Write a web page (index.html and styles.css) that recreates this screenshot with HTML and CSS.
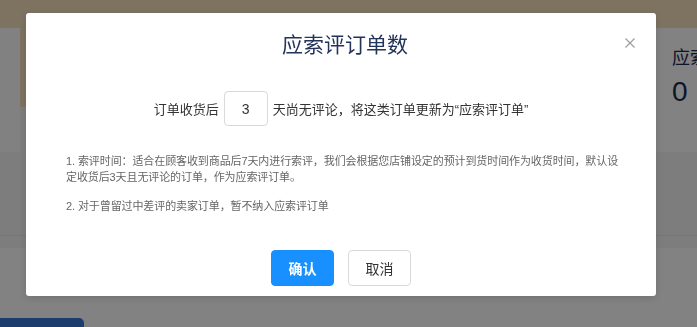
FILE: index.html
```html
<!DOCTYPE html>
<html lang="zh-CN">
<head>
  <meta charset="UTF-8">
  <meta name="viewport" content="width=device-width, initial-scale=1.0">
  <title>应索评订单数</title>
  <link rel="stylesheet" href="styles.css">
</head>
<body>
  <div class="page">
    <!-- Stats row behind the dialog -->
    <div class="stats">
      <div class="stat-card stat-left"></div>
      <div class="stat-card stat-right">
        <div class="stat-label">应索评订单数</div>
        <div class="stat-value">0</div>
      </div>
    </div>

    <div class="toolbar"></div>

    <div class="list">
      <button class="list-btn">批量索评 按钮</button>
    </div>
  </div>

  <div class="mask"></div>

  <!-- Dialog -->
  <div class="modal">
    <span class="modal-close">
      <svg width="10" height="10" viewBox="0 0 10 10"><path d="M0.5 0.5 L9.5 9.5 M9.5 0.5 L0.5 9.5" stroke="#9a9a9a" stroke-width="1.1" fill="none"/></svg>
    </span>
    <h2 class="modal-title">应索评订单数</h2>

    <div class="days-row">
      <span>订单收货后</span>
      <input class="days-input" type="text" value="3">
      <span>天尚无评论，将这类订单更新为“应索评订单”</span>
    </div>

    <div class="notes">
      <p>1. 索评时间：适合在顾客收到商品后7天内进行索评，我们会根据您店铺设定的预计到货时间作为收货时间，默认设定收货后3天且无评论的订单，作为应索评订单。</p>
      <p>2. 对于曾留过中差评的卖家订单，暂不纳入应索评订单</p>
    </div>

    <div class="modal-footer">
      <button class="btn btn-primary">确认</button>
      <button class="btn">取消</button>
    </div>
  </div>
</body>
</html>
```

FILE: styles.css
```css
body {
  margin: 0;
  font-family: "Liberation Sans", "Noto Sans CJK SC", sans-serif;
  background-color: #f6f6f6;
  overflow: hidden;
}

.page {
  height: 327px;
  overflow: hidden;
  background: linear-gradient(to bottom, #f8e2bc 107px, #f6f6f6 107px);
}

.stats {
  display: flex;
  justify-content: space-between;
  padding-top: 28px;
}

.stat-card {
  height: 124px;
  background-color: #ffffff;
}

.stat-left {
  width: 20px;
  background-color: #fdfdfd;
}

.stat-right {
  width: 25px;
  padding-left: 16px;
  box-sizing: content-box;
  white-space: nowrap;
}

.stat-label {
  margin-top: 18px;
  font-size: 18px;
  line-height: 24px;
  color: #1b2b52;
}

.stat-value {
  margin-top: 6px;
  font-size: 28px;
  line-height: 32px;
  color: #1b2b52;
}

.toolbar {
  height: 83px;
  border-bottom: 1px solid #e6e6e6;
  background-color: #f6f6f6;
}

.list {
  margin-top: 12px;
  padding-top: 70px;
  background-color: #ffffff;
  height: 140px;
}

.list-btn {
  margin-left: -30px;
  height: 30px;
  padding: 0 16px;
  border: none;
  border-radius: 5px;
  background-color: #3a76d8;
  color: #fff;
  font-family: inherit;
  font-size: 13px;
  vertical-align: top;
}

.mask {
  position: fixed;
  inset: 0;
  background-color: rgba(0, 0, 0, 0.49);
}

.modal {
  position: fixed;
  top: 13px;
  left: 26px;
  width: 630px;
  box-sizing: border-box;
  padding: 17px 40px 10px;
  background-color: #ffffff;
  border-radius: 3px;
  box-shadow: 0 2px 8px rgba(0, 0, 0, 0.15);
}

.modal-close {
  position: absolute;
  top: 25px;
  right: 21px;
  display: flex;
}

.modal-title {
  margin: 0;
  padding-left: 8px;
  font-size: 21px;
  font-weight: normal;
  line-height: 30px;
  text-align: center;
  color: #23345a;
}

.days-row {
  display: flex;
  justify-content: center;
  align-items: center;
  gap: 5px;
  margin-top: 31px;
  font-size: 13px;
  color: #333;
}

.days-input {
  width: 44px;
  height: 35px;
  box-sizing: border-box;
  border: 1px solid #d9d9d9;
  border-radius: 4px;
  text-align: center;
  font-family: inherit;
  font-size: 14px;
  color: #333;
  outline: none;
}

.notes {
  margin-top: 27px;
  margin-right: -6px;
  font-size: 11px;
  line-height: 16px;
  letter-spacing: -0.1px;
  color: #666;
}

.notes p {
  margin: 0 0 13px;
}

.notes p:last-child {
  margin-bottom: 0;
}

.modal-footer {
  display: flex;
  justify-content: center;
  gap: 14px;
  margin-top: 36px;
}

.btn {
  width: 63px;
  height: 36px;
  border: 1px solid #d9d9d9;
  border-radius: 4px;
  background-color: #fff;
  font-family: inherit;
  font-size: 14px;
  color: #333;
  cursor: pointer;
}

.btn-primary {
  border-color: #1890ff;
  background-color: #1890ff;
  color: #fff;
  font-weight: bold;
}
```
